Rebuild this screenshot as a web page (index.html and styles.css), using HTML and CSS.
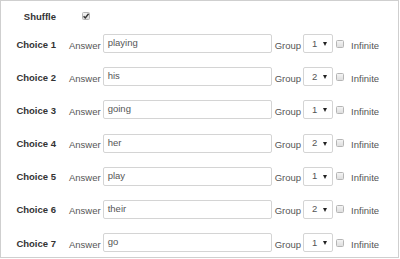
FILE: index.html
```html
<!DOCTYPE html>
<html>
<head>
<meta charset="utf-8">
<link rel="stylesheet" href="styles.css">
</head>
<body>
<div class="panel">
  <div class="row shuffle-row">
    <div class="label">Shuffle</div>
    <span class="cb checked"><svg viewBox="0 0 8 8" width="8" height="8"><path d="M1.6 4.2 L3.3 6 L6.6 1.8" fill="none" stroke="#333" stroke-width="1.4"/></svg></span>
  </div>
  <div class="row"><div class="label">Choice 1</div><span class="txt">Answer</span><div class="input">playing</div><span class="txt">Group</span><div class="select"><span>1</span><i class="arrow"></i></div><span class="cb"></span><span class="txt inf">Infinite</span></div>
  <div class="row"><div class="label">Choice 2</div><span class="txt">Answer</span><div class="input">his</div><span class="txt">Group</span><div class="select"><span>2</span><i class="arrow"></i></div><span class="cb"></span><span class="txt inf">Infinite</span></div>
  <div class="row"><div class="label">Choice 3</div><span class="txt">Answer</span><div class="input">going</div><span class="txt">Group</span><div class="select"><span>1</span><i class="arrow"></i></div><span class="cb"></span><span class="txt inf">Infinite</span></div>
  <div class="row"><div class="label">Choice 4</div><span class="txt">Answer</span><div class="input">her</div><span class="txt">Group</span><div class="select"><span>2</span><i class="arrow"></i></div><span class="cb"></span><span class="txt inf">Infinite</span></div>
  <div class="row"><div class="label">Choice 5</div><span class="txt">Answer</span><div class="input">play</div><span class="txt">Group</span><div class="select"><span>1</span><i class="arrow"></i></div><span class="cb"></span><span class="txt inf">Infinite</span></div>
  <div class="row"><div class="label">Choice 6</div><span class="txt">Answer</span><div class="input">their</div><span class="txt">Group</span><div class="select"><span>2</span><i class="arrow"></i></div><span class="cb"></span><span class="txt inf">Infinite</span></div>
  <div class="row"><div class="label">Choice 7</div><span class="txt">Answer</span><div class="input">go</div><span class="txt">Group</span><div class="select"><span>1</span><i class="arrow"></i></div><span class="cb"></span><span class="txt inf">Infinite</span></div>
</div>
</body>
</html>
```
FILE: styles.css
```css
html, body {
  margin: 0;
  padding: 0;
  background: #fff;
}
body {
  font-family: "Liberation Sans", Arial, sans-serif;
  font-size: 9.5px;
  color: #555;
}
.panel {
  box-sizing: border-box;
  width: 399px;
  height: 258px;
  border: 1px solid #cfcfcf;
  padding-top: 5px;
  display: flex;
  flex-direction: column;
  gap: 14.17px;
}
.row {
  display: flex;
  align-items: center;
  height: 19px;
}
.shuffle-row {
  margin-bottom: -5px;
}
.label {
  width: 55px;
  text-align: right;
  font-weight: bold;
  color: #333;
  margin-right: 13px;
  padding-top: 1px;
}
.txt {
  padding-top: 3px;
  color: #555;
}
.input {
  box-sizing: border-box;
  width: 169px;
  height: 19px;
  margin-left: 2px;
  margin-right: 3px;
  border: 1px solid #d4d4d4;
  border-radius: 2px;
  padding: 0 4px;
  line-height: 16px;
  color: #555;
}
.select {
  box-sizing: border-box;
  width: 30px;
  height: 19px;
  margin-left: 2px;
  margin-right: 3px;
  border: 1px solid #d4d4d4;
  border-radius: 2px;
  display: flex;
  align-items: center;
  padding-left: 8px;
  position: relative;
}
.select span {
  color: #555;
  line-height: 16px;
}
.arrow {
  position: absolute;
  right: 5px;
  top: 7px;
  width: 0;
  height: 0;
  border-left: 2.5px solid transparent;
  border-right: 2.5px solid transparent;
  border-top: 4px solid #222;
}
.cb {
  box-sizing: border-box;
  width: 8px;
  height: 8px;
  border: 1px solid #b5b5b5;
  border-radius: 1.5px;
  background: linear-gradient(#f4f4f4, #dedede);
  display: inline-flex;
  align-items: center;
  justify-content: center;
}
.cb svg {
  display: block;
}
.shuffle-row .cb {
  margin-left: 13px;
  position: relative;
}
.shuffle-row .cb svg {
  position: absolute;
  left: -1px;
  top: -1px;
}
.inf {
  margin-left: 7px;
}
```
